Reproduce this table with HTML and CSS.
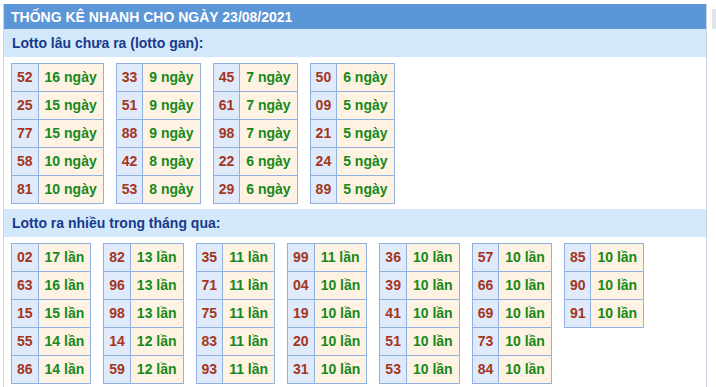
FILE: index.html
```html
<!DOCTYPE html>
<html lang="vi">
<head>
<meta charset="utf-8">
<title>Thống kê nhanh</title>
<link rel="stylesheet" href="styles.css">
</head>
<body>
<div class="page">
  <div class="box">
    <div class="title">THỐNG KÊ NHANH CHO NGÀY 23/08/2021</div>
    <div class="sub">Lotto lâu chưa ra (lotto gan):</div>
    <div class="group">
      <table class="t"><tr><td class="n">52</td><td class="v">16 ngày</td></tr><tr><td class="n">25</td><td class="v">15 ngày</td></tr><tr><td class="n">77</td><td class="v">15 ngày</td></tr><tr><td class="n">58</td><td class="v">10 ngày</td></tr><tr><td class="n">81</td><td class="v">10 ngày</td></tr></table>
      <table class="t"><tr><td class="n">33</td><td class="v">9 ngày</td></tr><tr><td class="n">51</td><td class="v">9 ngày</td></tr><tr><td class="n">88</td><td class="v">9 ngày</td></tr><tr><td class="n">42</td><td class="v">8 ngày</td></tr><tr><td class="n">53</td><td class="v">8 ngày</td></tr></table>
      <table class="t"><tr><td class="n">45</td><td class="v">7 ngày</td></tr><tr><td class="n">61</td><td class="v">7 ngày</td></tr><tr><td class="n">98</td><td class="v">7 ngày</td></tr><tr><td class="n">22</td><td class="v">6 ngày</td></tr><tr><td class="n">29</td><td class="v">6 ngày</td></tr></table>
      <table class="t"><tr><td class="n">50</td><td class="v">6 ngày</td></tr><tr><td class="n">09</td><td class="v">5 ngày</td></tr><tr><td class="n">21</td><td class="v">5 ngày</td></tr><tr><td class="n">24</td><td class="v">5 ngày</td></tr><tr><td class="n">89</td><td class="v">5 ngày</td></tr></table>
    </div>
    <div class="sub">Lotto ra nhiều trong tháng qua:</div>
    <div class="group">
      <table class="t"><tr><td class="n">02</td><td class="v">17 lần</td></tr><tr><td class="n">63</td><td class="v">16 lần</td></tr><tr><td class="n">15</td><td class="v">15 lần</td></tr><tr><td class="n">55</td><td class="v">14 lần</td></tr><tr><td class="n">86</td><td class="v">14 lần</td></tr></table>
      <table class="t"><tr><td class="n">82</td><td class="v">13 lần</td></tr><tr><td class="n">96</td><td class="v">13 lần</td></tr><tr><td class="n">98</td><td class="v">13 lần</td></tr><tr><td class="n">14</td><td class="v">12 lần</td></tr><tr><td class="n">59</td><td class="v">12 lần</td></tr></table>
      <table class="t"><tr><td class="n">35</td><td class="v">11 lần</td></tr><tr><td class="n">71</td><td class="v">11 lần</td></tr><tr><td class="n">75</td><td class="v">11 lần</td></tr><tr><td class="n">83</td><td class="v">11 lần</td></tr><tr><td class="n">93</td><td class="v">11 lần</td></tr></table>
      <table class="t"><tr><td class="n">99</td><td class="v">11 lần</td></tr><tr><td class="n">04</td><td class="v">10 lần</td></tr><tr><td class="n">19</td><td class="v">10 lần</td></tr><tr><td class="n">20</td><td class="v">10 lần</td></tr><tr><td class="n">31</td><td class="v">10 lần</td></tr></table>
      <table class="t"><tr><td class="n">36</td><td class="v">10 lần</td></tr><tr><td class="n">39</td><td class="v">10 lần</td></tr><tr><td class="n">41</td><td class="v">10 lần</td></tr><tr><td class="n">51</td><td class="v">10 lần</td></tr><tr><td class="n">53</td><td class="v">10 lần</td></tr></table>
      <table class="t"><tr><td class="n">57</td><td class="v">10 lần</td></tr><tr><td class="n">66</td><td class="v">10 lần</td></tr><tr><td class="n">69</td><td class="v">10 lần</td></tr><tr><td class="n">73</td><td class="v">10 lần</td></tr><tr><td class="n">84</td><td class="v">10 lần</td></tr></table>
      <table class="t"><tr><td class="n">85</td><td class="v">10 lần</td></tr><tr><td class="n">90</td><td class="v">10 lần</td></tr><tr><td class="n">91</td><td class="v">10 lần</td></tr></table>
    </div>
  </div>
  <div class="side"></div>
</div>
</body>
</html>
```

FILE: styles.css
```css
html, body {
  margin: 0;
  padding: 0;
  background: #ffffff;
}
body {
  font-family: "Liberation Sans", Arial, sans-serif;
  font-size: 14px;
}
.page {
  display: flex;
  align-items: flex-start;
  padding: 4px 0 0 3px;
  gap: 5px;
}
.box {
  width: 703px;
  border-left: 1px solid #cbd6e4;
  border-right: 1px solid #cbd6e4;
  min-height: 400px;
}
.side {
  width: 4px;
  height: 20px;
  margin-top: 5px;
  background: #e4e4e4;
}
.title {
  background: #5b96d6;
  color: #ffffff;
  font-weight: bold;
  font-size: 14px;
  height: 25px;
  line-height: 26px;
  padding-left: 7px;
}
.sub {
  background: #d4e8fb;
  color: #173a8c;
  font-weight: bold;
  font-size: 14px;
  height: 28px;
  line-height: 28px;
  padding-left: 8px;
}
.group {
  display: flex;
  align-items: flex-start;
  gap: 12px;
  padding: 6px 0 5px 7px;
}
.t {
  border-collapse: collapse;
  font-weight: bold;
  font-size: 14px;
}
.t td {
  border: 1px solid #8fb0e0;
  height: 27px;
  line-height: 27px;
  white-space: nowrap;
}
.n {
  background: #dfeafa;
  color: #a3361f;
  text-align: center;
  padding: 0 5px;
}
.v {
  background: #fef3e2;
  color: #17881a;
  padding: 0 6px;
}
```
